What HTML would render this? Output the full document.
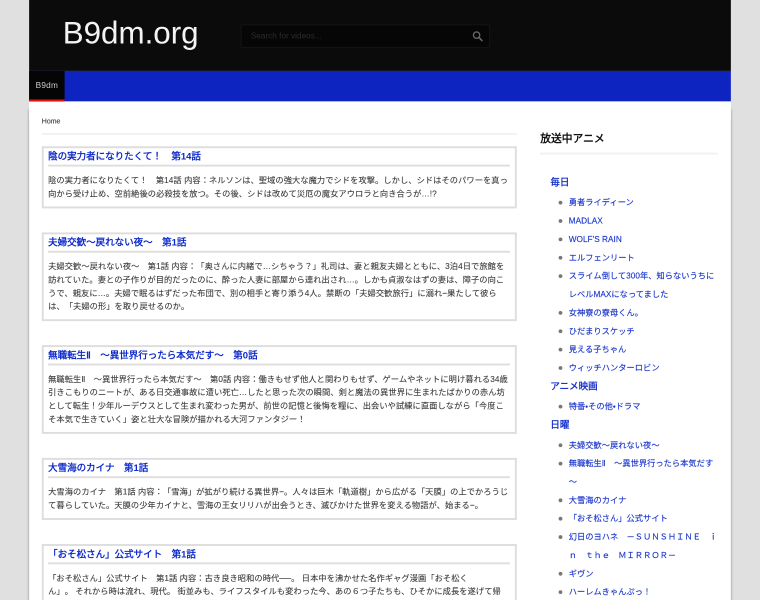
<!DOCTYPE html>
<html lang="ja"><head><meta charset="utf-8"><title>B9dm.org</title>
<style>
html,body{margin:0;padding:0;width:760px;height:600px;overflow:hidden;background:#e0e0e0}
#clip{position:absolute;left:0;top:0;width:760px;height:600px;overflow:hidden}
#r{position:absolute;left:0;top:0;width:1200px;height:948px;transform:scale(.63333);transform-origin:0 0;filter:blur(.5px);font-family:"Liberation Sans","WenQuanYi Zen Hei",sans-serif;text-spacing-trim:space-all}
.abs{position:absolute}
#panel{left:46px;top:172px;width:1108px;height:800px;background:#fff;box-shadow:0 0 4px rgba(0,0,0,.4);border-radius:4px 4px 0 0}
#strip{left:46px;top:160px;width:1108px;height:30px;background:#fff}
#head{left:46px;top:0;width:1108px;height:112px;background:#0b0b0b}
#logo{left:99px;top:22px;font-size:49.5px;line-height:62px;color:#f4f4f4;white-space:nowrap}
#search{left:380px;top:38px;width:394px;height:38px;box-sizing:border-box;background:#060606;border:2px solid #121212;border-radius:3px}
#stxt{left:396px;top:48px;font-size:13px;line-height:18px;color:#2c2c2c;white-space:nowrap}
#nav{left:46px;top:112px;width:1108px;height:48px;background:#0d24c0}
#act{left:46px;top:112px;width:56px;height:45px;background:#050505;border-bottom:3px solid #e01010;color:#ccc;font-size:13px;letter-spacing:.4px;line-height:45px;text-align:center}
#home{left:66px;top:184px;font-size:11px;line-height:16px;color:#333;-webkit-text-stroke:.15px #333}
#hr1{left:66px;top:210px;width:750px;height:3px;background:#f1f1f1}
.card{position:absolute;left:66px;width:750px;box-sizing:border-box;border:3px solid #ddd;background:#fff}
.card h2{position:absolute;left:7px;right:8px;top:1px;height:25px;margin:0;border-bottom:3px solid #ddd;font-size:15px;line-height:25px;font-weight:bold;color:#0d2acb;white-space:nowrap}
.card p{position:absolute;left:7px;top:40px;margin:0;font-size:13px;line-height:21px;color:#3a3a3a;letter-spacing:.11px;white-space:nowrap;-webkit-text-stroke:.15px #3a3a3a}
#sh{left:853px;top:205px;font-size:17px;line-height:28px;font-weight:bold;color:#111;white-space:nowrap}
#hr2{left:853px;top:241px;width:281px;height:3px;background:#f1f1f1}
#side{left:869px;top:273px;width:280px;color:#1a35cc;white-space:nowrap}
#side div{font-size:15px;font-weight:bold;line-height:32px;height:32px}
#side ul{list-style:none;margin:0;padding:0 0 0 29px}
#side li{position:relative;font-size:13px;line-height:29px;height:29px;letter-spacing:.04px;-webkit-text-stroke:.2px #1a35cc}
#side li.two{height:58px}
#side li:before{content:"";position:absolute;left:-16px;top:12px;width:6px;height:6px;border-radius:50%;background:#777}
</style></head><body>
<div id="clip"><div id="r">
<div class="abs" id="panel"></div>
<div class="abs" id="strip"></div>
<div class="abs" id="head"></div>
<div class="abs" id="logo">B9dm.org</div>
<div class="abs" id="search"></div>
<div class="abs" id="stxt">Search for videos...</div>
<svg class="abs" style="left:745px;top:48px" width="18" height="18" viewBox="0 0 18 18"><circle cx="7.5" cy="7.5" r="5" fill="none" stroke="#666" stroke-width="2.2"/><path d="M11.5 11.5l4.5 4.5" stroke="#666" stroke-width="2.6" stroke-linecap="round"/></svg>
<div class="abs" id="nav"></div>
<div class="abs" id="act">B9dm</div>
<div class="abs" id="home">Home</div>
<div class="abs" id="hr1"></div>

<div class="card" style="top:231px;height:98px"><h2>陰の実力者になりたくて！　第14話</h2>
<p>陰の実力者になりたくて！　第14話 内容：ネルソンは、聖域の強大な魔力でシドを攻撃。しかし、シドはそのパワーを真っ<br>向から受け止め、空前絶後の必殺技を放つ。その後、シドは改めて災厄の魔女アウロラと向き合うが…!?</p></div>

<div class="card" style="top:367px;height:140px"><h2>夫婦交歓～戻れない夜～　第1話</h2>
<p>夫婦交歓～戻れない夜～　第1話 内容：「奥さんに内緒で…シちゃう？」礼司は、妻と親友夫婦とともに、3泊4日で旅館を<br>訪れていた。妻との子作りが目的だったのに、酔った人妻に部屋から連れ出され…。しかも貞淑なはずの妻は、障子の向こ<br>うで、親友に…。夫婦で眠るはずだった布団で、別の相手と寄り添う4人。禁断の「夫婦交歓旅行」に溺れ−果たして彼ら<br>は、「夫婦の形」を取り戻せるのか。</p></div>

<div class="card" style="top:545px;height:140px"><h2>無職転生Ⅱ　～異世界行ったら本気だす～　第0話</h2>
<p>無職転生Ⅱ　～異世界行ったら本気だす～　第0話 内容：働きもせず他人と関わりもせず、ゲームやネットに明け暮れる34歳<br>引きこもりのニートが、ある日交通事故に遭い死亡…したと思った次の瞬間、剣と魔法の異世界に生まれたばかりの赤ん坊<br>として転生！少年ルーデウスとして生まれ変わった男が、前世の記憶と後悔を糧に、出会いや試練に直面しながら「今度こ<br>そ本気で生きていく」姿と壮大な冒険が描かれる大河ファンタジー！</p></div>

<div class="card" style="top:723px;height:98px"><h2>大雪海のカイナ　第1話</h2>
<p>大雪海のカイナ　第1話 内容：「雪海」が拡がり続ける異世界−。人々は巨木「軌道樹」から広がる「天膜」の上でかろうじ<br>て暮らしていた。天膜の少年カイナと、雪海の王女リリハが出会うとき、滅びかけた世界を変える物語が、始まる−。</p></div>

<div class="card" style="top:859px;height:140px"><h2>「おそ松さん」公式サイト　第1話</h2>
<p>「おそ松さん」公式サイト　第1話 内容：古き良き昭和の時代──。 日本中を沸かせた名作ギャグ漫画「おそ松く<br>ん」。 それから時は流れ、現代。 街並みも、ライフスタイルも変わった今、あの６つ子たちも、ひそかに成長を遂げて帰</p></div>

<div class="abs" id="sh">放送中アニメ</div>
<div class="abs" id="hr2"></div>
<div class="abs" id="side">
<div>毎日</div>
<ul><li>勇者ライディーン</li><li>MADLAX</li><li>WOLF'S RAIN</li><li>エルフェンリート</li><li class="two">スライム倒して300年、知らないうちに<br>レベルMAXになってました</li><li>女神寮の寮母くん。</li><li>ひだまりスケッチ</li><li>見える子ちゃん</li><li>ウィッチハンターロビン</li></ul>
<div>アニメ映画</div>
<ul><li>特番・その他・ドラマ</li></ul>
<div>日曜</div>
<ul><li>夫婦交歓～戻れない夜～</li><li class="two">無職転生Ⅱ　～異世界行ったら本気だす<br>～</li><li>大雪海のカイナ</li><li>「おそ松さん」公式サイト</li><li class="two">幻日のヨハネ　－ＳＵＮＳＨＩＮＥ　ｉ<br>ｎ　ｔｈｅ　ＭＩＲＲＯＲ－</li><li>ギヴン</li><li>ハーレムきゃんぷっ！</li></ul>
</div>
</div></div>
</body></html>
